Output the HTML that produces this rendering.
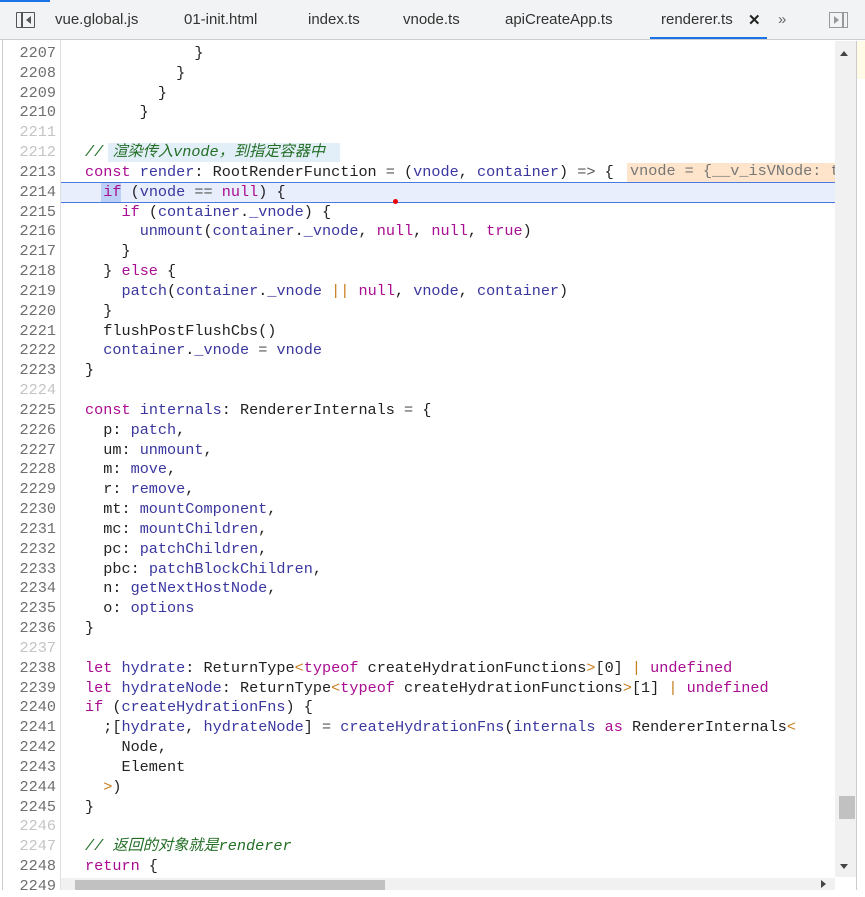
<!DOCTYPE html>
<html><head><meta charset="utf-8"><style>
*{margin:0;padding:0;box-sizing:border-box}
html,body{width:865px;height:890px;overflow:hidden;background:#fff;font-family:"Liberation Sans","Noto Sans CJK SC",sans-serif}
.tabbar{position:absolute;left:0;top:0;width:865px;height:40px;background:#f1f3f4;border-bottom:1px solid #cbcdd1}
.tab{position:absolute;top:11px;font-size:15px;color:#333;white-space:nowrap}
.code{position:absolute;left:0;top:0;width:865px;height:890px;font-family:"Liberation Mono","Noto Sans CJK SC",monospace;font-size:15.2px}
.ln{position:absolute;left:0;width:56px;text-align:right;color:#6e6e6e;height:19.83px;line-height:19.83px}
.ln.d{color:#c4c4c4}
.l{position:absolute;left:85px;white-space:pre;height:19.83px;line-height:19.83px;color:#222}
.k{color:#aa0d91}.v{color:#3a379f}.c{color:#236e25;font-style:italic}.g{color:#555}.o{color:#c87d1a}
</style></head><body>
<div class="code">
<div style="position:absolute;left:61px;top:44px;width:774px;height:846px;background:#fff"></div>
<div style="position:absolute;left:60px;top:40px;width:1px;height:850px;background:#e0e0e0"></div>
<div style="position:absolute;left:2px;top:40px;width:1px;height:850px;background:#ccc"></div>
<!-- highlight 2214 -->
<div style="position:absolute;left:61px;top:182px;width:774px;height:21px;background:#e8eefc;border-top:1px solid #4b7be0;border-bottom:1px solid #4b7be0"></div>
<div style="position:absolute;left:101px;top:183px;width:20px;height:19px;background:#bcd0f5"></div>
<div style="position:absolute;left:393px;top:199px;width:5px;height:5px;border-radius:50%;background:#e00"></div>
<div style="position:absolute;left:627px;top:163px;width:208px;height:19px;background:#fde4cb"></div>
<div style="position:absolute;left:630px;top:162px;white-space:pre;line-height:19.83px;color:#777;font-size:15.2px">vnode = {__v_isVNode: t</div>
<div style="position:absolute;left:108px;top:143px;width:232px;height:19px;background:#e2eff9"></div>
<div id="lines"></div>
</div>
<div class="tabbar">
<div style="position:absolute;left:0;top:0;width:50px;height:2px;background:#1a73e8"></div>
<div style="position:absolute;left:16px;top:12px;width:19px;height:16px;border:1.5px solid #555;border-radius:1px"></div>
<div style="position:absolute;left:21px;top:13px;width:1.5px;height:14px;background:#555"></div>
<div style="position:absolute;left:26px;top:16px;width:0;height:0;border-top:4px solid transparent;border-bottom:4px solid transparent;border-right:5px solid #555"></div>
<span class="tab" style="left:55px">vue.global.js</span>
<span class="tab" style="left:184px">01-init.html</span>
<span class="tab" style="left:308px">index.ts</span>
<span class="tab" style="left:403px">vnode.ts</span>
<span class="tab" style="left:505px">apiCreateApp.ts</span>
<span class="tab" style="left:661px">renderer.ts</span>
<span class="tab" style="left:748px;font-weight:bold;color:#222">✕</span>
<span class="tab" style="left:778px;color:#666">»</span>
<div style="position:absolute;left:650px;top:37px;width:117px;height:2px;background:#1a73e8"></div>
<div style="position:absolute;left:829px;top:12px;width:19px;height:16px;border:1.5px solid #999"></div>
<div style="position:absolute;left:842px;top:13px;width:1.5px;height:14px;background:#999"></div>
<div style="position:absolute;left:834px;top:16px;width:0;height:0;border-top:4px solid transparent;border-bottom:4px solid transparent;border-left:5px solid #999"></div>
</div>
<!-- vertical scrollbar -->
<div style="position:absolute;left:835px;top:41px;width:21px;height:836px;background:#f1f1f1"></div>
<div style="position:absolute;left:840px;top:51px;border-left:4px solid transparent;border-right:4px solid transparent;border-bottom:5px solid #444"></div>
<div style="position:absolute;left:840px;top:864px;border-left:4px solid transparent;border-right:4px solid transparent;border-top:5px solid #444"></div>
<div style="position:absolute;left:839px;top:796px;width:16px;height:23px;background:#c1c1c1"></div>
<div style="position:absolute;left:856px;top:41px;width:9px;height:849px;background:#fff;border-left:1px solid #ccc"></div>
<div style="position:absolute;left:857px;top:41px;width:8px;height:38px;background:#fffbe6"></div>
<!-- horizontal scrollbar -->
<div style="position:absolute;left:61px;top:878px;width:774px;height:12px;background:#f1f1f1"></div>
<div style="position:absolute;left:75px;top:880px;width:310px;height:10px;background:#c1c1c1"></div>
<div style="position:absolute;left:821px;top:880px;border-top:4px solid transparent;border-bottom:4px solid transparent;border-left:5px solid #444"></div>
<script>
var L=[
['2207','            }',0],
['2208','          }',0],
['2209','        }',0],
['2210','      }',0],
['2211','',1],
['2212','<span class="c">// 渲染传入vnode，到指定容器中</span>',1],
['2213','<span class="k">const</span> <span class="v">render</span>: RootRenderFunction <span class="g">=</span> (<span class="v">vnode</span>, <span class="v">container</span>) <span class="g">=&gt;</span> {',0],
['2214','  <span class="k">if</span> (<span class="v">vnode</span> <span class="g">==</span> <span class="k">null</span>) {',0],
['2215','    <span class="k">if</span> (<span class="v">container</span>.<span class="v">_vnode</span>) {',0],
['2216','      <span class="v">unmount</span>(<span class="v">container</span>.<span class="v">_vnode</span>, <span class="k">null</span>, <span class="k">null</span>, <span class="k">true</span>)',0],
['2217','    }',0],
['2218','  } <span class="k">else</span> {',0],
['2219','    <span class="v">patch</span>(<span class="v">container</span>.<span class="v">_vnode</span> <span class="o">||</span> <span class="k">null</span>, <span class="v">vnode</span>, <span class="v">container</span>)',0],
['2220','  }',0],
['2221','  flushPostFlushCbs()',0],
['2222','  <span class="v">container</span>.<span class="v">_vnode</span> <span class="g">=</span> <span class="v">vnode</span>',0],
['2223','}',0],
['2224','',1],
['2225','<span class="k">const</span> <span class="v">internals</span>: RendererInternals <span class="g">=</span> {',0],
['2226','  p: <span class="v">patch</span>,',0],
['2227','  um: <span class="v">unmount</span>,',0],
['2228','  m: <span class="v">move</span>,',0],
['2229','  r: <span class="v">remove</span>,',0],
['2230','  mt: <span class="v">mountComponent</span>,',0],
['2231','  mc: <span class="v">mountChildren</span>,',0],
['2232','  pc: <span class="v">patchChildren</span>,',0],
['2233','  pbc: <span class="v">patchBlockChildren</span>,',0],
['2234','  n: <span class="v">getNextHostNode</span>,',0],
['2235','  o: <span class="v">options</span>',0],
['2236','}',0],
['2237','',1],
['2238','<span class="k">let</span> <span class="v">hydrate</span>: ReturnType<span class="o">&lt;</span><span class="k">typeof</span> createHydrationFunctions<span class="o">&gt;</span>[0] <span class="o">|</span> <span class="k">undefined</span>',0],
['2239','<span class="k">let</span> <span class="v">hydrateNode</span>: ReturnType<span class="o">&lt;</span><span class="k">typeof</span> createHydrationFunctions<span class="o">&gt;</span>[1] <span class="o">|</span> <span class="k">undefined</span>',0],
['2240','<span class="k">if</span> (<span class="v">createHydrationFns</span>) {',0],
['2241','  ;[<span class="v">hydrate</span>, <span class="v">hydrateNode</span>] <span class="g">=</span> <span class="v">createHydrationFns</span>(<span class="v">internals</span> <span class="k">as</span> RendererInternals<span class="o">&lt;</span>',0],
['2242','    Node,',0],
['2243','    Element',0],
['2244','  <span class="o">&gt;</span>)',0],
['2245','}',0],
['2246','',1],
['2247','<span class="c">// 返回的对象就是renderer</span>',1],
['2248','<span class="k">return</span> {',0],
['2249','',0]
];
var h='';
for(var i=0;i<L.length;i++){
 var t=(44+i*19.83).toFixed(2);
 h+='<div class="ln'+(L[i][2]?' d':'')+'" style="top:'+t+'px">'+L[i][0]+'</div>';
 h+='<div class="l" style="top:'+t+'px">'+L[i][1]+'</div>';
}
document.getElementById('lines').innerHTML=h;
</script>
</body></html>
